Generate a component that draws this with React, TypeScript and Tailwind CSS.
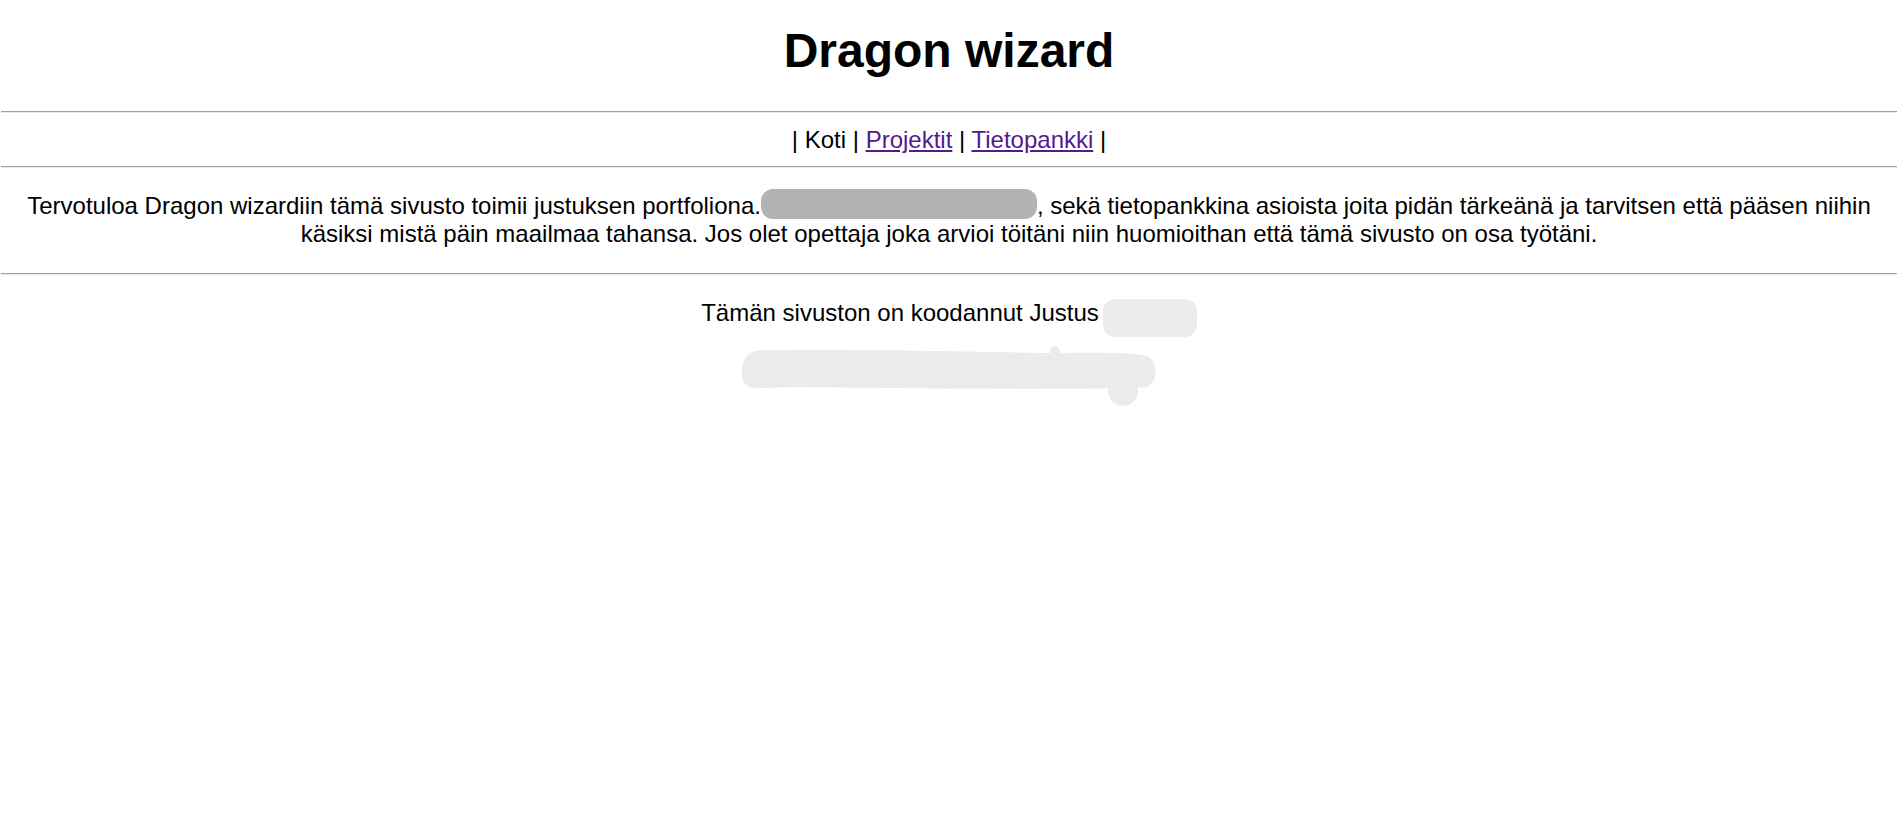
export default function App() {
  return (
    <div className="min-h-screen bg-white pl-px pr-[5px] font-['Liberation_Sans',Arial,sans-serif] text-[24px] leading-[normal] text-black">
      <h1 className="mt-[23px] mb-[33px] text-center text-[48px] font-bold leading-[normal]">
        Dragon wizard
      </h1>
      <Rule />
      <p className="mt-[13px] mb-[12px] text-center">
        | Koti |{" "}
        <a href="#" className="text-[#551a8b] underline">
          Projektit
        </a>{" "}
        |{" "}
        <a href="#" className="text-[#551a8b] underline">
          Tietopankki
        </a>{" "}
        |
      </p>
      <Rule />
      <p className="mt-[21px] mb-[25px] text-center">
        Tervotuloa Dragon wizardiin tämä sivusto toimii justuksen portfoliona.
        <span className="-mb-[5px] inline-block h-[30px] w-[276px] rounded-[12px] bg-[#b3b3b3]" />
        , sekä tietopankkina asioista joita pidän tärkeänä ja tarvitsen että
        pääsen niihin käsiksi mistä päin maailmaa tahansa. Jos olet opettaja
        joka arvioi töitäni niin huomioithan että tämä sivusto on osa työtäni.
      </p>
      <Rule />
      <p className="mt-[24px] text-center">
        Tämän sivuston on koodannut Justus
        <span className="-mb-[16px] ml-[4px] inline-block h-[38px] w-[94px] rounded-[12px] bg-[#ececec]" />
      </p>
      <div className="mt-[18px] flex justify-center">
        <svg width="420" height="62" viewBox="0 0 420 62" fill="#ebebeb">
          <path d="M16 6 C60 3 200 6 300 8 C340 8 400 6 410 12 C419 20 419 36 408 42 C360 45 200 44 60 42 C30 42 14 46 6 39 C-1 31 3 9 16 6 Z" />
          <circle cx="316" cy="6" r="5" />
          <circle cx="384" cy="46" r="15" />
        </svg>
      </div>
    </div>
  );
}

function Rule() {
  return <div className="h-0 border-t border-b border-t-[#a0a0a0] border-b-[#e9e9e9]" />;
}
